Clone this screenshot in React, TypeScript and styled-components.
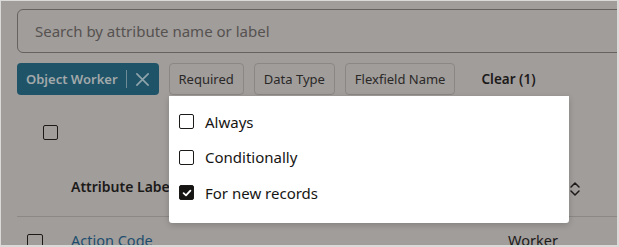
import React from "react";
import styled, { createGlobalStyle } from "styled-components";

const Global = createGlobalStyle`
  html, body { margin: 0; padding: 0; background: #a19d9b; }
  body { font-family: "Noto Sans", "Open Sans", sans-serif; }
  * { box-sizing: border-box; }
`;

const Frame = styled.div`
  position: relative;
  width: 619px;
  height: 247px;
  overflow: hidden;
  background: #a19d9b;
  border: 1px solid #dcdad8;
  border-right-width: 2px;
  border-bottom-width: 2px;
`;

const Content = styled.div`
  display: flex;
  flex-direction: column;
  padding: 8px 0 0 16px;
`;

const SearchBar = styled.div`
  width: 640px;
  height: 44px;
  border: 1px solid #66625f;
  border-radius: 6px;
  display: flex;
  align-items: center;
  padding-left: 17px;
  font-size: 15px;
  color: #555250;
`;

const ChipRow = styled.div`
  display: flex;
  align-items: center;
  gap: 10px;
  margin-top: 10px;
  height: 32px;
  white-space: nowrap;
`;

const ActiveChip = styled.div`
  display: flex;
  align-items: center;
  height: 32px;
  padding: 0 9px 0 9px;
  border-radius: 4px;
  background: #1f5468;
  color: #a3a9ab;
  font-size: 13px;
  font-weight: 600;
  gap: 8px;
`;

const Divider = styled.span`
  width: 1px;
  height: 18px;
  background: #6f8b95;
`;

const Chip = styled.div`
  display: flex;
  align-items: center;
  height: 32px;
  padding: 0 9px;
  border: 1px solid #8b8785;
  border-radius: 4px;
  color: #2a2827;
  font-size: 13px;
`;

const ClearLink = styled.div`
  margin-left: 16px;
  font-size: 13.5px;
  font-weight: 600;
  color: #1c1a19;
`;

const Table = styled.div`
  display: flex;
  flex-direction: column;
  width: 640px;
`;

const HeaderRow = styled.div`
  display: grid;
  grid-template-columns: 54px 437px 73px;
  height: 122px;
  border-bottom: 1px solid #8b8886;
`;

const SelectCell = styled.div<{ $pad: number; $top: number }>`
  padding-left: ${(p) => p.$pad}px;
  padding-top: ${(p) => p.$top}px;
`;

const HeaderCell = styled.div`
  display: flex;
  align-items: flex-end;
  padding-bottom: 20px;
  font-size: 14px;
  font-weight: 600;
  color: #1c1a19;
`;

const SortHeader = styled(HeaderCell)`
  justify-content: space-between;
  padding-bottom: 19px;
`;

const BodyRow = styled.div`
  display: grid;
  grid-template-columns: 54px 437px 1fr;
  height: 40px;
`;

const BodyCell = styled.div<{ $link?: boolean }>`
  padding-top: 13px;
  font-size: 14.5px;
  color: ${(p) => (p.$link ? "#1d4d6d" : "#1c1a19")};
`;

const Box = styled.span<{ $size: number; $checked?: boolean }>`
  display: inline-flex;
  align-items: center;
  justify-content: center;
  width: ${(p) => p.$size}px;
  height: ${(p) => p.$size}px;
  border: 1.5px solid #1c1a19;
  border-radius: 2px;
  background: ${(p) => (p.$checked ? "#161513" : "transparent")};
  flex: none;
`;

const Popup = styled.div`
  position: absolute;
  left: 168px;
  top: 95px;
  width: 400px;
  height: 127px;
  background: #ffffff;
  border-radius: 0 0 3px 3px;
  box-shadow: 0 2px 6px rgba(0, 0, 0, 0.18);
  display: flex;
  flex-direction: column;
  padding: 8px 0 0 10px;
`;

const Option = styled.label`
  display: flex;
  align-items: center;
  gap: 11px;
  height: 35.5px;
  font-size: 15px;
  color: #161513;
`;

const Check = () => (
  <svg width="10" height="10" viewBox="0 0 10 10">
    <path d="M1.6 5.2 L4 7.4 L8.4 2.6" fill="none" stroke="#fff" strokeWidth="1.8" strokeLinecap="round" strokeLinejoin="round" />
  </svg>
);

const Close = () => (
  <svg width="15" height="15" viewBox="0 0 16 16">
    <path d="M2 2 L14 14 M14 2 L2 14" stroke="#8ea3ab" strokeWidth="1.8" strokeLinecap="round" />
  </svg>
);

const SortIcon = () => (
  <svg width="12" height="16" viewBox="0 0 12 16">
    <path d="M2 6 L6 2 L10 6 M2 10 L6 14 L10 10" fill="none" stroke="#1c1a19" strokeWidth="1.5" strokeLinecap="round" strokeLinejoin="round" />
  </svg>
);

const options = [
  { label: "Always", checked: false },
  { label: "Conditionally", checked: false },
  { label: "For new records", checked: true },
];

export default function App() {
  return (
    <Frame>
      <Global />
      <Content>
        <SearchBar>Search by attribute name or label</SearchBar>
        <ChipRow>
          <ActiveChip>
            Object Worker
            <Divider />
            <Close />
          </ActiveChip>
          <Chip>Required</Chip>
          <Chip>Data Type</Chip>
          <Chip>Flexfield Name</Chip>
          <ClearLink>Clear (1)</ClearLink>
        </ChipRow>
        <Table>
          <HeaderRow>
            <SelectCell $pad={26} $top={28}>
              <Box $size={15} />
            </SelectCell>
            <HeaderCell>Attribute Label</HeaderCell>
            <SortHeader>
              Object
              <SortIcon />
            </SortHeader>
          </HeaderRow>
          <BodyRow>
            <SelectCell $pad={10} $top={16}>
              <Box $size={16} />
            </SelectCell>
            <BodyCell $link>Action Code</BodyCell>
            <BodyCell>Worker</BodyCell>
          </BodyRow>
        </Table>
      </Content>
      <Popup>
        {options.map((o) => (
          <Option key={o.label}>
            <Box $size={15} $checked={o.checked}>
              {o.checked && <Check />}
            </Box>
            {o.label}
          </Option>
        ))}
      </Popup>
    </Frame>
  );
}
